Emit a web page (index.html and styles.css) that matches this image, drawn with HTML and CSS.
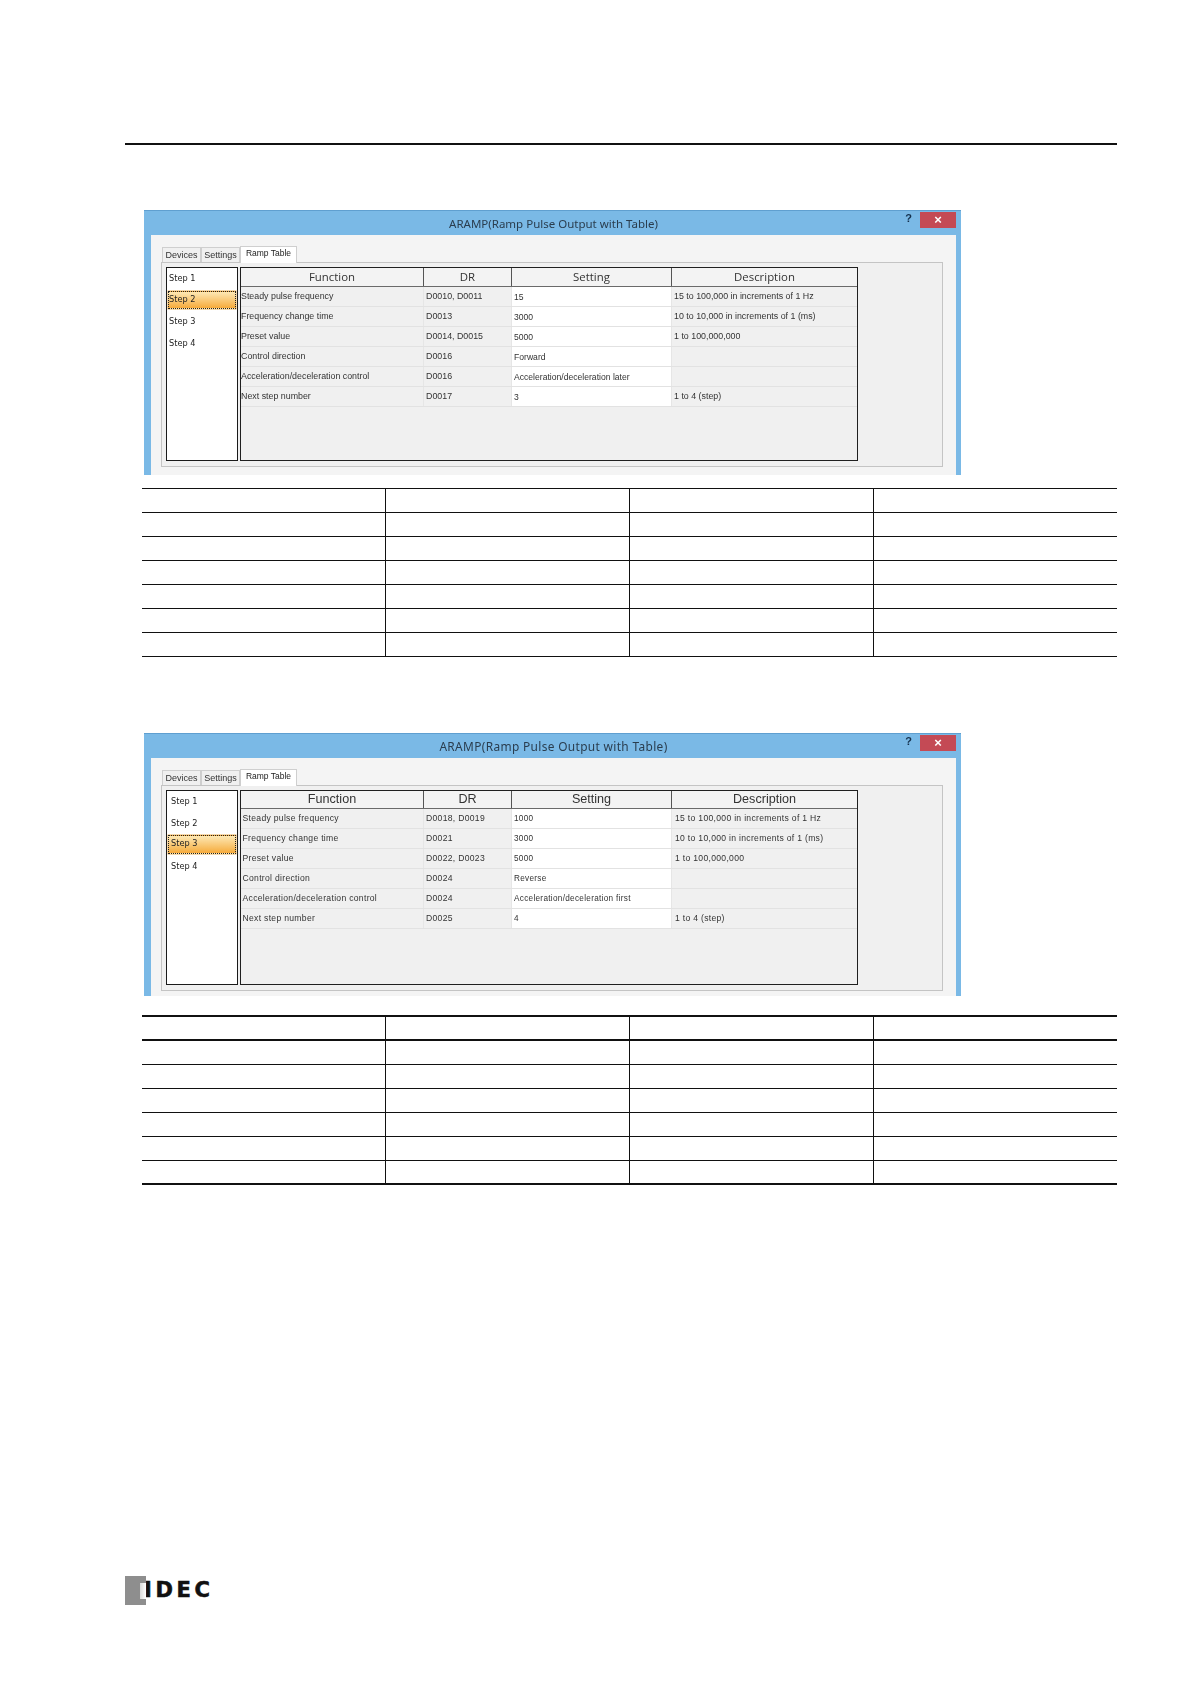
FILE: index.html
```html
<!DOCTYPE html>
<html lang="en">
<head>
<meta charset="utf-8">
<title>ARAMP Ramp Table</title>
<link rel="stylesheet" href="styles.css">
</head>
<body>
<div class="page">
  <div class="rule"></div>

  <section class="dialog dialog-a">
    <div class="titlebar">
      <span class="title">ARAMP(Ramp Pulse Output with Table)</span>
      <span class="help">?</span>
      <span class="close">×</span>
    </div>
    <div class="body">
      <div class="tabs">
        <span class="tab">Devices</span>
        <span class="tab">Settings</span>
        <span class="tab tab-on">Ramp Table</span>
      </div>
      <div class="panel">
        <ul class="steps">
          <li class="step">Step 1</li>
          <li class="step step-on">Step 2</li>
          <li class="step">Step 3</li>
          <li class="step">Step 4</li>
        </ul>
        <div class="grid">
          <div class="row head"><span>Function</span><span>DR</span><span>Setting</span><span>Description</span></div>
          <div class="row"><span>Steady pulse frequency</span><span>D0010, D0011</span><span>15</span><span>15 to 100,000 in increments of 1 Hz</span></div>
          <div class="row"><span>Frequency change time</span><span>D0013</span><span>3000</span><span>10 to 10,000 in increments of 1 (ms)</span></div>
          <div class="row"><span>Preset value</span><span>D0014, D0015</span><span>5000</span><span>1 to 100,000,000</span></div>
          <div class="row"><span>Control direction</span><span>D0016</span><span>Forward</span><span></span></div>
          <div class="row"><span>Acceleration/deceleration control</span><span>D0016</span><span>Acceleration/deceleration later</span><span></span></div>
          <div class="row"><span>Next step number</span><span>D0017</span><span>3</span><span>1 to 4 (step)</span></div>
        </div>
      </div>
    </div>
  </section>

  <table class="spec spec-a">
    <tr><td></td><td></td><td></td><td></td></tr>
    <tr><td></td><td></td><td></td><td></td></tr>
    <tr><td></td><td></td><td></td><td></td></tr>
    <tr><td></td><td></td><td></td><td></td></tr>
    <tr><td></td><td></td><td></td><td></td></tr>
    <tr><td></td><td></td><td></td><td></td></tr>
    <tr><td></td><td></td><td></td><td></td></tr>
  </table>

  <section class="dialog dialog-b">
    <div class="titlebar">
      <span class="title">ARAMP(Ramp Pulse Output with Table)</span>
      <span class="help">?</span>
      <span class="close">×</span>
    </div>
    <div class="body">
      <div class="tabs">
        <span class="tab">Devices</span>
        <span class="tab">Settings</span>
        <span class="tab tab-on">Ramp Table</span>
      </div>
      <div class="panel">
        <ul class="steps">
          <li class="step">Step 1</li>
          <li class="step">Step 2</li>
          <li class="step step-on">Step 3</li>
          <li class="step">Step 4</li>
        </ul>
        <div class="grid">
          <div class="row head"><span>Function</span><span>DR</span><span>Setting</span><span>Description</span></div>
          <div class="row"><span>Steady pulse frequency</span><span>D0018, D0019</span><span>1000</span><span>15 to 100,000 in increments of 1 Hz</span></div>
          <div class="row"><span>Frequency change time</span><span>D0021</span><span>3000</span><span>10 to 10,000 in increments of 1 (ms)</span></div>
          <div class="row"><span>Preset value</span><span>D0022, D0023</span><span>5000</span><span>1 to 100,000,000</span></div>
          <div class="row"><span>Control direction</span><span>D0024</span><span>Reverse</span><span></span></div>
          <div class="row"><span>Acceleration/deceleration control</span><span>D0024</span><span>Acceleration/deceleration first</span><span></span></div>
          <div class="row"><span>Next step number</span><span>D0025</span><span>4</span><span>1 to 4 (step)</span></div>
        </div>
      </div>
    </div>
  </section>

  <table class="spec spec-b">
    <tr class="spec-head"><td></td><td></td><td></td><td></td></tr>
    <tr><td></td><td></td><td></td><td></td></tr>
    <tr><td></td><td></td><td></td><td></td></tr>
    <tr><td></td><td></td><td></td><td></td></tr>
    <tr><td></td><td></td><td></td><td></td></tr>
    <tr><td></td><td></td><td></td><td></td></tr>
    <tr><td></td><td></td><td></td><td></td></tr>
  </table>

  <footer class="logo">
    <span class="logo-mark"></span>
    <span class="logo-text">IDEC</span>
  </footer>
</div>
</body>
</html>
```
FILE: styles.css
```css
* { box-sizing: border-box; }
html, body { margin: 0; background: #fff; }
body { font-family: "Liberation Sans", Arial, sans-serif; }

.page {
  width: 1190px;
  height: 1684px;
  padding: 143px 73px 0 125px;
  overflow: hidden;
}
.rule { height: 2px; background: #111; }

/* dialog window */
.dialog {
  position: relative;
  width: 817px;
  margin-left: 19px;
  background: #7ab9e6;
  border-top: 1px solid #5f9fd0;
  padding: 0 5px 0 7px;
  filter: blur(0.3px);
}
.dialog-a { height: 265px; margin-top: 65px; }
.dialog-b { height: 263px; margin-top: 76px; }

.titlebar {
  height: 24px;
  display: flex;
  align-items: center;
  justify-content: center;
}
.title { font-family: "Noto Sans", "Open Sans", sans-serif; font-size: 11.5px; color: #2a3d4e; }
.dialog-b .title { font-size: 11.9px; letter-spacing: 0.35px; }
.help {
  position: absolute;
  top: 1px;
  right: 49px;
  font: bold 11px "Liberation Sans", sans-serif;
  color: #14304c;
}
.close {
  position: absolute;
  top: 1px;
  right: 5px;
  width: 36px;
  height: 16px;
  background: #c44a55;
  color: #fff;
  font: bold 13px/15px "Liberation Sans", sans-serif;
  text-align: center;
}

.body {
  height: calc(100% - 24px);
  background: #f4f4f4;
  padding: 10px 0 0 10px;
}
.tabs { display: flex; align-items: flex-end; height: 17px; padding-left: 1px; }
.tab {
  width: 39px;
  height: 15px;
  background: #f0f0f0;
  border: 1px solid #cfcfcf;
  border-bottom: 0;
  font-size: 9px;
  line-height: 15px;
  text-align: center;
  color: #333;
  white-space: nowrap;
}
.tab-on {
  width: 57px;
  height: 17px;
  background: #fff;
  font-size: 8.5px;
  line-height: 13px;
  color: #222;
  position: relative;
  top: 1px;
}
.panel {
  display: flex;
  gap: 2px;
  width: 782px;
  height: 205px;
  padding: 4px 5px 5px 4px;
  background: #f0f0f0;
  border: 1px solid #c4c4c4;
}
.dialog-b .panel { height: 206px; }

/* step list */
.steps {
  width: 72px;
  height: 194px;
  margin: 0;
  padding: 0 1px;
  list-style: none;
  background: #fff;
  border: 1px solid #1a1a1a;
}
.dialog-b .steps { height: 195px; }
.step {
  height: 21.5px;
  border: 1px solid transparent;
  font-family: "DejaVu Sans", sans-serif;
  font-size: 8.2px;
  line-height: 18px;
  color: #222;
}
.step-on {
  height: 18.5px;
  margin: 1px 0 2px;
  border: 1px dotted #222;
  line-height: 15px;
  background: linear-gradient(#fde8b4, #f6ab3c);
  box-shadow: 0 0 0 0.5px #e9b25c;
}
.dialog-b .step { padding-left: 2px; }

/* parameter grid */
.grid {
  width: 618px;
  height: 194px;
  background: #f0f0f0;
  border: 1px solid #1f1f1f;
}
.dialog-b .grid { height: 195px; }
.row {
  display: grid;
  grid-template-columns: 183px 88px 160px 185px;
  height: 20px;
  font-size: 8.85px;
  color: #333;
  border-bottom: 1px solid #e2e2e2;
}
.row span {
  display: block;
  line-height: 19px;
  white-space: nowrap;
  overflow: hidden;
  border-right: 1px solid #e6e6e6;
}
.row span:nth-child(2) { padding-left: 2px; }
.row span:nth-child(3) { background: #fff; padding-left: 2px; line-height: 21px; font-size: 8.6px; }
.row span:nth-child(4) { padding-left: 2px; border-right: 0; }

.row.head {
  height: 19px;
  font-family: "Open Sans", "Noto Sans", sans-serif;
  color: #333;
  background: #f3f3f3;
  border-bottom: 1px solid #6a6a6a;
}
.row.head span,
.row.head span:nth-child(3) {
  padding: 0;
  background: transparent;
  text-align: center;
  line-height: 18px;
  font-size: 11.4px;
  border-right: 1px solid #555;
}
.row.head span:nth-child(4) { border-right: 0; }

.dialog-b .row { font-size: 8.6px; letter-spacing: 0.3px; }
.dialog-b .row span { padding-left: 1.5px; }
.dialog-b .row span:nth-child(2) { padding-left: 2px; }
.dialog-b .row span:nth-child(3) { padding-left: 2px; font-size: 8.2px; line-height: 20px; }
.dialog-b .row span:nth-child(4) { padding-left: 3px; }
.dialog-b .row.head { height: 18px; font-family: "Liberation Sans", sans-serif; letter-spacing: 0; }
.dialog-b .row.head span,
.dialog-b .row.head span:nth-child(2),
.dialog-b .row.head span:nth-child(3),
.dialog-b .row.head span:nth-child(4) { padding: 0; font-size: 12.6px; line-height: 17px; }

/* empty specification tables */
.spec {
  width: 975px;
  margin-left: 17px;
  border-collapse: collapse;
  table-layout: fixed;
}
.spec td {
  height: 24px;
  padding: 0;
  border: 1px solid #111;
}
.spec td:first-child { border-left: 0; }
.spec td:last-child { border-right: 0; }
.spec-a { margin-top: 13px; }
.spec-b { margin-top: 19px; }
.spec-b tr:first-child td { border-top: 2px solid #111; }
.spec-b .spec-head td { border-bottom: 2px solid #111; }
.spec-b tr:last-child td { border-bottom: 2px solid #111; }

/* footer logo */
.logo {
  display: flex;
  align-items: center;
  height: 29px;
  margin-top: 391px;
}
.logo-mark {
  position: relative;
  width: 21px;
  height: 29px;
  background: #8e8e8e;
}
.logo-mark::after {
  content: "";
  position: absolute;
  right: 0;
  top: 7px;
  width: 6px;
  height: 16px;
  background: linear-gradient(90deg, #d8d8d8, #fff);
}
.logo-text {
  margin-left: -2px;
  font-family: "DejaVu Sans", sans-serif;
  font-weight: bold;
  font-size: 21px;
  letter-spacing: 3.6px;
  line-height: 29px;
  color: #111;
  -webkit-text-stroke: 0.6px #111;
}
```
